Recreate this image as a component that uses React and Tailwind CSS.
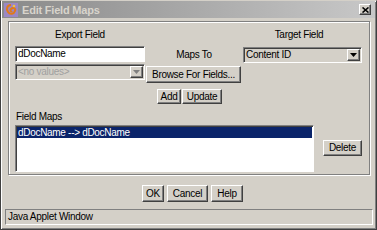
import React from 'react';

const raised =
  'bg-[#d4d0c8] border border-t-white border-l-white border-r-[#404040] border-b-[#404040] shadow-[inset_-1px_-1px_0_#808080]';
const sunken =
  'border border-t-[#808080] border-l-[#808080] border-r-white border-b-white shadow-[inset_1px_1px_0_#404040]';

// Small classic push button
const Btn = ({ children, className = '' }) => (
  <div className={`${raised} flex items-center justify-center text-black ${className}`}>
    {children}
  </div>
);

// Drop-down arrow box inside a combo
const Arrow = ({ disabled }) => (
  <div className={`${raised} w-[13px] h-[12px] flex items-center justify-center`}>
    <svg width="7" height="4" viewBox="0 0 7 4">
      <polygon points="0,0 7,0 3.5,4" fill={disabled ? '#808080' : '#000'} />
    </svg>
  </div>
);

const AppIcon = () => (
  <svg width="14" height="14" viewBox="0 0 14 14">
    <rect x="0" y="0" width="14" height="14" fill="#9a88c4" />
    <path d="M7 2 C3 2 2 6 4 9 C6 12 10 11 11 8 C12 5 9 4 7 6 C6 7 7 9 8 8" stroke="#e07a1a" strokeWidth="2" fill="none" />
    <circle cx="10" cy="3" r="1.3" fill="#f0c040" />
  </svg>
);

export default function App() {
  return (
    <div
      className="w-[377px] h-[230px] bg-[#d4d0c8] border border-t-[#d4d0c8] border-l-[#404040] border-r-[#404040] border-b-[#404040] shadow-[inset_1px_1px_0_#fff,inset_-1px_-1px_0_#808080] flex flex-col overflow-hidden text-[10px] leading-[12px] tracking-[-0.3px] text-black"
      style={{ fontFamily: '"Liberation Sans", Arial, sans-serif' }}
    >
      {/* Title bar */}
      <div className="h-[17px] mx-[1px] flex items-center bg-gradient-to-r from-[#8a8a8a] to-[#c8c8c8] pl-[2px] pr-[4px]">
        <AppIcon />
        <span className="ml-[4px] font-bold text-[11px] tracking-[-0.2px] text-[#d8d4cc]">Edit Field Maps</span>
        <div className="ml-auto">
          <Btn className="w-[12px] h-[11px]">
            <svg width="7" height="6" viewBox="0 0 7 6">
              <path d="M0.5 0.5 L6.5 5.5 M6.5 0.5 L0.5 5.5" stroke="#000" strokeWidth="1.6" />
            </svg>
          </Btn>
        </div>
      </div>

      {/* Group box */}
      <div className="mt-[3px] ml-[7px] w-[362px] h-[154px] border border-[#808080] shadow-[1px_1px_0_#fff,inset_1px_1px_0_#fff] flex flex-col">
        {/* Column labels */}
        <div className="mt-[7px] h-[12px] flex">
          <div className="ml-[6px] w-[130px] text-center">Export Field</div>
          <div className="ml-[98px] w-[112px] text-center">Target Field</div>
        </div>

        {/* Inputs */}
        <div className="mt-[5px] h-[18px] flex items-start">
          <div className={`ml-[6px] w-[130px] h-[16px] bg-white ${sunken} flex items-center pl-[2px]`}>
            dDocName
          </div>
          <div className="w-[98px] h-[16px] flex items-center justify-center pt-[2px]">Maps To</div>
          <div className={`mt-[1px] w-[119px] h-[16px] bg-[#d4d0c8] ${sunken} flex items-center pl-[2px] pr-[1px]`}>
            <span>Content ID</span>
            <div className="ml-auto">
              <Arrow />
            </div>
          </div>
        </div>

        <div className="h-[19px] flex items-start">
          <div className={`ml-[6px] w-[130px] h-[16px] bg-[#d4d0c8] ${sunken} flex items-center pl-[2px] pr-[1px]`}>
            <span className="text-[#a0a0a0]">&lt;no values&gt;</span>
            <div className="ml-auto">
              <Arrow disabled />
            </div>
          </div>
          <Btn className="mt-[2px] ml-[1px] w-[95px] h-[17px]">Browse For Fields...</Btn>
        </div>

        <div className="mt-[6px] h-[15px] flex gap-[1px] pl-[148px]">
          <Btn className="w-[24px] h-[15px]">Add</Btn>
          <Btn className="w-[40px] h-[15px]">Update</Btn>
        </div>

        <div className="mt-[7px] h-[12px] ml-[7px]">Field Maps</div>

        <div className="mt-[2px] flex items-start">
          <div className={`ml-[6px] w-[299px] h-[47px] bg-white ${sunken} p-[1px]`}>
            <div className="h-[11px] bg-[#0a246a] text-white flex items-center pl-[1px]">
              dDocName --&gt; dDocName
            </div>
          </div>
          <Btn className="mt-[15px] ml-[9px] w-[39px] h-[16px]">Delete</Btn>
        </div>
      </div>

      {/* Dialog buttons */}
      <div className="mt-[10px] h-[17px] flex gap-[3px] pl-[141px]">
        <Btn className="w-[22px] h-[17px]">OK</Btn>
        <Btn className="w-[41px] h-[17px]">Cancel</Btn>
        <Btn className="w-[32px] h-[17px]">Help</Btn>
      </div>

      {/* Status bar */}
      <div className={`mt-[7px] ml-[4px] w-[368px] h-[16px] ${sunken} shadow-none flex items-center pl-[2px]`}>
        Java Applet Window
      </div>
    </div>
  );
}
